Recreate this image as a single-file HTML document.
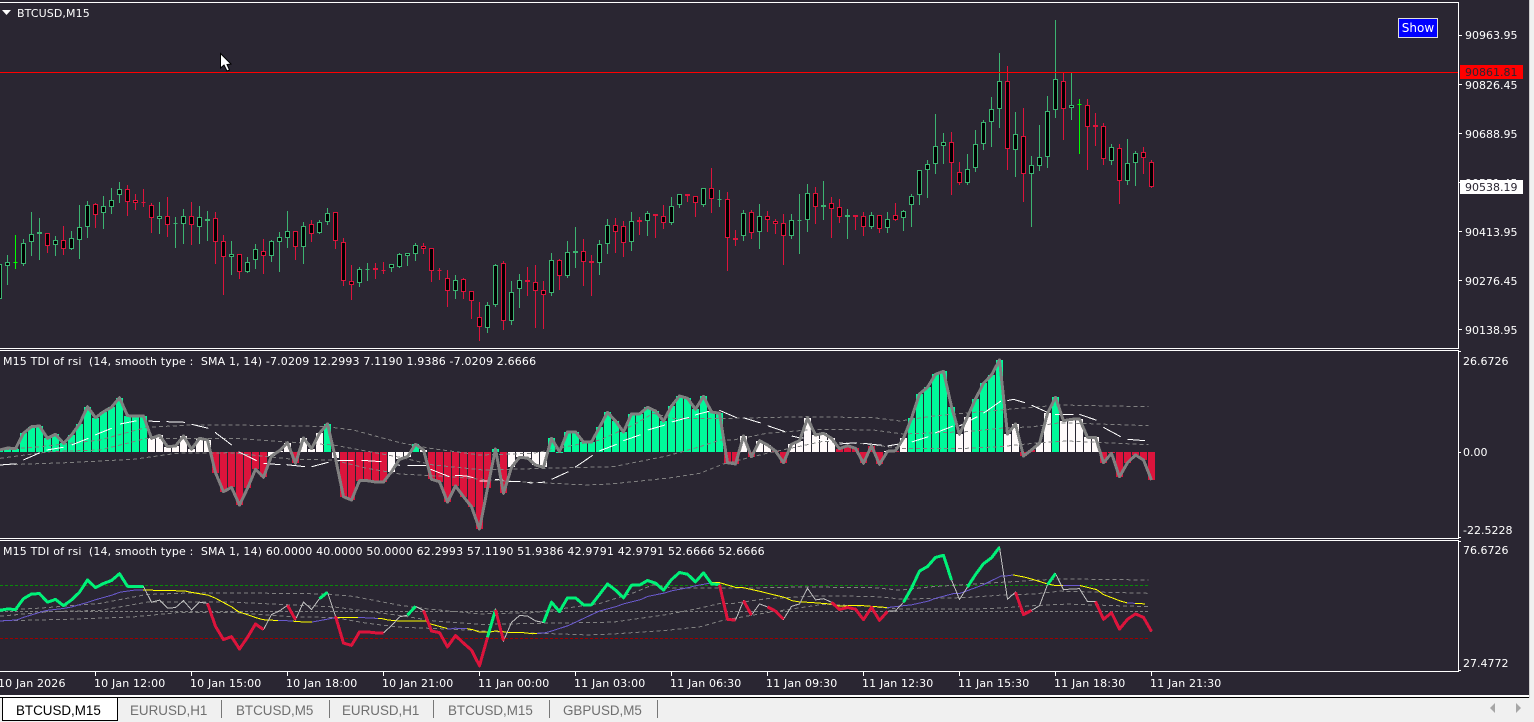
<!DOCTYPE html>
<html><head><meta charset="utf-8"><title>BTCUSD,M15</title>
<style>
html,body{margin:0;padding:0;width:1534px;height:722px;overflow:hidden;background:#2a2632}
#w{position:relative;width:1534px;height:722px;overflow:hidden;background:#2a2632}
svg{position:absolute;left:0;top:0}
.t{position:absolute;white-space:pre;font:11px/14px "DejaVu Sans","Liberation Sans",sans-serif;color:#fff}
.p{left:1465px}
.a{left:1463px}
.x{top:677px;letter-spacing:.15px}
.l{letter-spacing:.16px}
.tb{position:absolute;top:702px;white-space:pre;font:13.4px/18px "Liberation Sans",sans-serif;color:#6f6f6f}
</style></head><body><div id="w">
<svg id="s" width="1534" height="722" xmlns="http://www.w3.org/2000/svg"></svg>
<div class="t" style="left:17px;top:7px;letter-spacing:.1px">BTCUSD,M15</div>
<div class="t l" style="left:3px;top:355px">M15 TDI of rsi  (14, smooth type :  SMA 1, 14) -7.0209 12.2993 7.1190 1.9386 -7.0209 2.6666</div>
<div class="t l" style="left:3px;top:545px">M15 TDI of rsi  (14, smooth type :  SMA 1, 14) 60.0000 40.0000 50.0000 62.2993 57.1190 51.9386 42.9791 42.9791 52.6666 52.6666</div>
<div class="t p" style="top:29px">90963.95</div>
<div class="t p" style="top:79px">90826.45</div>
<div class="t p" style="top:128px">90688.95</div>
<div class="t p" style="top:177px">90551.45</div>
<div class="t p" style="top:226px">90413.95</div>
<div class="t p" style="top:275px">90276.45</div>
<div class="t p" style="top:324px">90138.95</div>
<div style="position:absolute;left:1460px;top:65px;width:63px;height:14px;background:#f00"></div>
<div class="t p" style="top:66px;color:#2a2632">90861.81</div>
<div style="position:absolute;left:1460px;top:180px;width:63px;height:14px;background:#fff"></div>
<div class="t p" style="top:181px;color:#2a2632">90538.19</div>
<div class="t a" style="top:355px">26.6726</div>
<div class="t a" style="top:446px">0.00</div>
<div class="t a" style="top:524px">-22.5228</div>
<div class="t a" style="top:544px">76.6726</div>
<div class="t a" style="top:657px">27.4772</div>
<div style="position:absolute;left:1398px;top:18px;width:38px;height:18px;border:1px solid #ddd;background:#00f"></div>
<div class="t" style="left:1398px;top:18px;width:40px;text-align:center;font:12px/20px 'DejaVu Sans',sans-serif">Show</div>
<div class="t x" style="left:-2px">10 Jan 2026</div>
<div class="t x" style="left:94px">10 Jan 12:00</div>
<div class="t x" style="left:190px">10 Jan 15:00</div>
<div class="t x" style="left:286px">10 Jan 18:00</div>
<div class="t x" style="left:382px">10 Jan 21:00</div>
<div class="t x" style="left:478px">11 Jan 00:00</div>
<div class="t x" style="left:574px">11 Jan 03:00</div>
<div class="t x" style="left:670px">11 Jan 06:30</div>
<div class="t x" style="left:766px">11 Jan 09:30</div>
<div class="t x" style="left:862px">11 Jan 12:30</div>
<div class="t x" style="left:958px">11 Jan 15:30</div>
<div class="t x" style="left:1054px">11 Jan 18:30</div>
<div class="t x" style="left:1150px">11 Jan 21:30</div>
<div style="position:absolute;left:0;top:695px;width:1529px;height:2px;background:#fff"></div>
<div style="position:absolute;left:0;top:697px;width:1529px;height:1px;background:#000"></div>
<div style="position:absolute;left:0;top:698px;width:1534px;height:24px;background:#f0f0f0"></div>
<div style="position:absolute;left:1529px;top:0;width:5px;height:698px;background:#f0f0f0"></div>
<div style="position:absolute;left:1529px;top:0;width:1px;height:698px;background:#cfcfcf"></div>
<div style="position:absolute;left:2px;top:697px;width:114px;height:22px;background:#fff;border:1px solid #000"></div>
<div class="tb" style="left:16px;color:#000">BTCUSD,M15</div>
<div class="tb" style="left:130px">EURUSD,H1</div>
<div class="tb" style="left:236px">BTCUSD,M5</div>
<div class="tb" style="left:342px">EURUSD,H1</div>
<div class="tb" style="left:448px">BTCUSD,M15</div>
<div class="tb" style="left:563px">GBPUSD,M5</div>
<div style="position:absolute;left:221px;top:700px;width:1px;height:18px;background:#777"></div>
<div style="position:absolute;left:329px;top:700px;width:1px;height:18px;background:#777"></div>
<div style="position:absolute;left:433px;top:700px;width:1px;height:18px;background:#777"></div>
<div style="position:absolute;left:549px;top:700px;width:1px;height:18px;background:#777"></div>
<div style="position:absolute;left:657px;top:700px;width:1px;height:18px;background:#777"></div>
<svg width="1534" height="722" xmlns="http://www.w3.org/2000/svg" style="pointer-events:none">
<path d="M1495 703V713L1490 708Z" fill="#a6a6a6"/>
<path d="M1516 703V713L1521 708Z" fill="#a6a6a6"/>
<path d="M2 10H11L6.5 15Z" fill="#fff"/>
<path d="M220.5 53.5V68L224 65L227 71L229.5 70L227 64.5L231 64Z" fill="#fff" stroke="#000" stroke-width="1"/>
</svg>
<script>
(function(){
var C=[[264,264,299,299,0],
[255,262,266,284,0],[235,262,263,268,2],[239,243,264,265,0],[212,234,242,255,0],[218,232,234,259,0],[233,233,246,252,1],[236,240,245,255,0],[226,240,249,254,1],[231,238,249,249,0],[205,227,240,258,0],
[201,205,227,237,0],[203,204,215,227,1],[196,206,213,228,0],[188,200,207,213,0],[182,189,195,202,0],[185,189,202,215,1],[194,200,203,209,1],[189,202,203,206,1],[203,205,218,232,1],[202,216,219,233,0],
[197,216,225,236,1],[217,223,224,247,0],[209,216,224,243,0],[202,216,225,244,1],[206,217,227,243,0],[211,219,221,240,0],[212,218,242,263,1],[235,241,257,294,1],[241,254,257,274,0],[254,254,272,278,1],
[257,262,272,272,0],[244,249,260,268,0],[239,251,256,273,1],[240,241,256,261,0],[232,237,242,271,0],[211,231,238,247,0],[231,231,247,259,1],[222,226,247,263,0],[220,224,234,241,1],[220,222,233,233,0],
[208,213,222,224,0],[212,212,241,248,1],[238,242,281,285,1],[265,281,285,299,1],[267,269,283,286,0],[263,269,270,280,0],[263,268,270,278,1],[262,270,271,273,1],[264,264,268,271,0],[253,254,267,267,0],
[253,253,256,265,0],[243,245,254,260,0],[243,246,249,253,1],[248,248,271,281,1],[268,270,271,279,1],[270,278,291,306,1],[275,280,291,298,0],[278,279,292,298,1],[291,291,301,318,1],[302,317,327,340,1],
[302,305,328,332,0],[264,265,305,306,0],[261,263,321,329,1],[281,292,321,324,0],[274,280,289,307,0],[267,280,282,295,1],[265,282,291,327,1],[281,290,295,328,1],[253,260,293,295,0],[259,260,276,289,1],
[241,252,276,277,0],[227,251,253,267,0],[239,251,262,285,1],[255,261,263,295,1],[240,244,263,274,0],[219,225,244,253,0],[218,225,232,252,1],[221,226,243,256,1],[212,221,242,250,0],[217,220,222,234,1],
[211,213,221,235,0],[214,214,216,237,1],[205,216,223,228,1],[197,206,223,224,0],[194,194,205,207,0],[194,194,196,201,1],[196,196,203,216,1],[188,188,205,206,0],[168,188,199,212,1],[190,199,200,206,0],
[192,199,238,270,1],[230,238,240,245,1],[210,213,236,240,0],[210,212,233,238,1],[204,216,232,248,0],[211,216,220,231,1],[219,221,224,233,1],[214,223,236,264,1],[214,220,236,238,0],[194,220,221,253,0],
[184,193,220,231,0],[187,193,207,223,1],[181,205,207,219,0],[197,203,209,237,1],[199,207,217,222,1],[209,215,217,238,0],[215,215,217,229,1],[212,216,227,235,1],[212,215,227,228,0],[215,215,229,232,1],
[212,219,228,232,0],[203,215,220,220,1],[210,211,218,230,0],[194,196,205,226,0],[170,170,195,204,0],[160,164,170,197,0],[114,146,164,173,0],[133,142,146,163,0],[132,142,163,194,1],[162,172,183,184,1],
[154,169,183,184,0],[130,144,168,171,0],[120,122,144,149,0],[97,109,122,146,0],[53,81,109,127,0],[66,81,149,169,1],[112,134,150,176,0],[108,136,174,201,1],[156,165,174,226,0],[125,157,166,170,0],
[96,111,157,167,0],[20,79,110,117,0],[72,81,109,139,1],[73,105,108,119,0],[99,104,105,153,2],[99,105,127,169,1],[113,125,127,145,1],[123,126,159,164,1],[144,147,161,164,0],[144,148,181,203,1],
[139,163,181,184,0],[151,153,163,185,0],[147,152,158,173,1],[160,162,187,187,1]];
var V=[300,294,296,250,230,228,265,253,280,255,222,170,203,185,172,143,197,198,198,265,256,290,288,258,298,265,270,368,425,412,465,415,358,382,318,302,278,340,264,296,250,222,325,440,450,392,392,396,396,365,328,320,283,300,388,395,456,408,440,470,537,415,297,430,352,322,324,345,352,265,305,246,246,276,276,232,187,213,246,192,192,172,183,213,168,138,145,178,139,186,190,338,342,258,320,272,285,303,338,283,272,205,255,250,265,296,287,295,340,287,343,304,302,265,205,132,112,73,64,170,253,200,147,100,75,30,252,222,318,300,280,190,142,212,208,207,262,262,338,310,380,338,315,330,390];
var cr=[['g',-1,17],['w',18,25],['r',26,32],['w',33,35],['r',36,36],['w',37,39],['g',40,40],['w',41,41],['r',42,47],['w',48,50],['g',51,51],['w',52,52],['r',53,60],['g',61,61],['r',62,62],['w',63,67],['g',68,89],['r',90,91],['w',92,92],['r',93,93],['w',94,95],['r',96,97],['w',98,103],['r',104,109],['w',110,110],['r',111,111],['w',112,112],['g',113,118],['w',119,120],['g',121,124],['w',125,126],['r',127,128],['w',129,130],['g',131,131],['w',132,136],['r',137,143]];
var col={g:'#00fa9a',r:'#dc143c',w:'#fffafa'};
var bg=[[0,300,120,290,300,270,440,232,575,225,700,225,900,228,980,230,1060,240,1200,278,1290,295,1440,315,1600,310,1800,270,1900,225,1960,190,2020,205,2200,205,2415,200,2620,203,2700,213,2800,198,3000,180,3180,165,3445,170],
[0,325,150,305,300,300,440,265,700,265,1000,285,1200,322,1300,345,1450,360,1640,355,1840,350,2000,318,2100,290,2160,270,2200,270,2300,250,2450,238,2620,240,2710,252,2900,245,3000,235,3100,230,3180,218,3445,227],
[0,345,200,338,400,328,530,310,690,308,880,328,1000,330,1100,355,1200,372,1350,380,1500,392,1760,405,1830,402,2000,385,2100,370,2170,342,2300,310,2470,274,2600,282,2700,295,2900,295,3000,290,3100,280,3200,273,3445,284]];
var S=[[0,345,50,341],[70,330,120,308],[140,300,190,292],[215,285,265,265],[285,255,335,235],[360,222,410,212],[445,213,480,215],[500,215,555,217],[575,223,625,235],[645,247,695,285],[715,305,770,332],[790,340,842,344],[860,344,915,350],[935,350,985,337],[1005,331,1060,331],[1085,331,1145,335],[1165,341,1200,346],
[1222,346,1278,346],[1292,358,1348,380],[1365,376,1400,378,1420,383],[1438,393,1470,393],[1485,388,1510,391],[1522,394,1562,394],[1582,397,1598,400],[1615,398,1635,396],[1655,388,1705,365],[1725,352,1778,316],[1798,303,1850,283],[1870,272,1922,254],[1943,240,1995,225],[2015,216,2067,202],[2085,195,2138,181],[2158,181,2210,203],[2230,203,2282,219],[2303,227,2355,245],[2375,258,2400,264],[2400,264,2410,264],
[2450,268,2500,274],[2518,282,2570,278],[2590,280,2645,286],[2662,288,2710,280],[2735,276,2785,260],[2805,249,2860,228],[2878,228,2932,200],[2950,190,3003,153],[3022,152,3040,148,3075,158],[3095,166,3145,188],[3165,193,3220,193],[3238,193,3290,211],[3310,232,3362,260],[3382,268,3435,272]];
function X(z){return z/3}
function Y2(z){return 350+z/3}
function Y3(z){return 540+(215.4+(z-306)*.701)/3}
function pts(a,fy){var o=[];for(var i=0;i<a.length;i+=2)o.push(X(a[i]).toFixed(1)+','+fy(a[i+1]).toFixed(1));return o.join(' ')}
var ce=' shape-rendering="crispEdges"';
var h='';
var cp={0:'#3cb371',1:'#dc143c',2:'#00ff00'};
var wick={0:'',1:'',2:''},body={0:'',1:'',2:''};
for(var i=0;i<C.length;i++){var c=C[i],x=7+8*(i-1),t=c[4];
 wick[t]+='M'+(x+.5)+' '+c[0]+'V'+(c[3]+1);
 var b=Math.max(c[1],0),e=Math.max(c[2]-c[1]-1,0);
 body[t]+='M'+(x-1.5)+' '+(b+.5)+'h4v'+e+'h-4z';
}
h+='<g shape-rendering="crispEdges">';
for(var t in wick){h+='<path d="'+wick[t]+'" stroke="'+cp[t]+'" stroke-width="1" fill="none"/>';}
for(var t in body){h+='<path d="'+body[t]+'" stroke="'+cp[t]+'" stroke-width="1" fill="#000"/>';}
h+='</g>';
h+='<g shape-rendering="crispEdges" fill="#fff">';
h+='<rect x="0" y="72" width="1459" height="1" fill="#f00"/>';
h+='<rect x="0" y="2" width="1459" height="1"/><rect x="0" y="348" width="1459" height="1"/><rect x="1458" y="2" width="1" height="347"/>';
h+='<rect x="0" y="350" width="1459" height="1"/><rect x="0" y="538" width="1459" height="1"/><rect x="1458" y="350" width="1" height="189"/>';
h+='<rect x="0" y="540" width="1459" height="1"/><rect x="0" y="671" width="1459" height="1"/><rect x="1458" y="540" width="1" height="132"/>';
[35,84,133,182,231,280,329].forEach(function(y){h+='<rect x="1459" y="'+y+'" width="3" height="1"/>'});
[351,452,537,541,670].forEach(function(y){h+='<rect x="1459" y="'+y+'" width="2" height="1"/>'});
for(var k=95;k<=1151;k+=96)h+='<rect x="'+k+'" y="672" width="1" height="4"/>';
cr.forEach(function(r){for(var k=r[1];k<=r[2];k++){var x=7+8*k-3,v=Y2(V[k+1]),y=Math.min(v,452),hh=Math.abs(v-452);h+='<rect x="'+x+'" y="'+y.toFixed(0)+'" width="7" height="'+Math.max(hh,1).toFixed(0)+'" fill="'+col[r[0]]+'"/>';}});
h+='</g>';
bg.forEach(function(b){h+='<polyline points="'+pts(b,Y2)+'" fill="none" stroke="#808080" stroke-width="1" stroke-dasharray="4 3"'+ce+'/>'});
S.forEach(function(a){h+='<polyline points="'+pts(a,Y2)+'" fill="none" stroke="#fff" stroke-width="1"'+ce+'/>'});
var gp=[],g3=[];
for(var i=0;i<V.length;i++){var x=7.5+8*(i-1);gp.push(x+','+Y2(V[i]).toFixed(1));g3.push(x+','+Y3(V[i]).toFixed(1));}
h+='<polyline points="'+gp.join(' ')+'" fill="none" stroke="#808080" stroke-width="3" stroke-linejoin="round"'+ce+'/>';
h+='<g shape-rendering="crispEdges" stroke-width="1" stroke-dasharray="3 2"><line x1="0" x2="1149" y1="585.5" y2="585.5" stroke="#0a8a0a"/><line x1="0" x2="1149" y1="611.5" y2="611.5" stroke="#808080"/><line x1="0" x2="1149" y1="638.5" y2="638.5" stroke="#a00000"/></g>';
bg.forEach(function(b){h+='<polyline points="'+pts(b,Y3)+'" fill="none" stroke="#808080" stroke-width="1" stroke-dasharray="4 3"'+ce+'/>'});
var all=[];S.forEach(function(a){all=all.concat(a)});
var ps=pts(all,Y3);
var pr=[[0,143],[278,293],[312,335],[358,378],[447,467],[537,711],[887,1013],[1063,1080],[1127,1135]];
h+='<clipPath id="pc">';pr.forEach(function(r){h+='<rect x="'+r[0]+'" y="540" width="'+(r[1]-r[0])+'" height="130"/>'});h+='</clipPath>';
h+='<polyline points="'+ps+'" fill="none" stroke="#ffff00" stroke-width="1"'+ce+'/>';
h+='<polyline points="'+ps+'" fill="none" stroke="#6a5acd" stroke-width="1" clip-path="url(#pc)"'+ce+'/>';
h+='<polyline points="'+g3.join(' ')+'" fill="none" stroke="#c0c0c0" stroke-width="1"'+ce+'/>';
function seg(a,b,c){return '<polyline points="'+g3.slice(a+1,b+2).join(' ')+'" fill="none" stroke="'+c+'" stroke-width="3" stroke-linejoin="round"'+ce+'/>'}
[[-1,17],[39,40],[50,51],[60,61],[67,89],[112,118],[120,124],[130,131]].forEach(function(r){h+=seg(r[0],r[1],'#00f078')});
[[25,32],[35,36],[41,47],[52,60],[61,62],[89,91],[92,93],[95,97],[103,110],[126,128],[136,143]].forEach(function(r){h+=seg(r[0],r[1],'#dc143c')});
document.getElementById('s').innerHTML=h;
})();
</script>
</div></body></html>
